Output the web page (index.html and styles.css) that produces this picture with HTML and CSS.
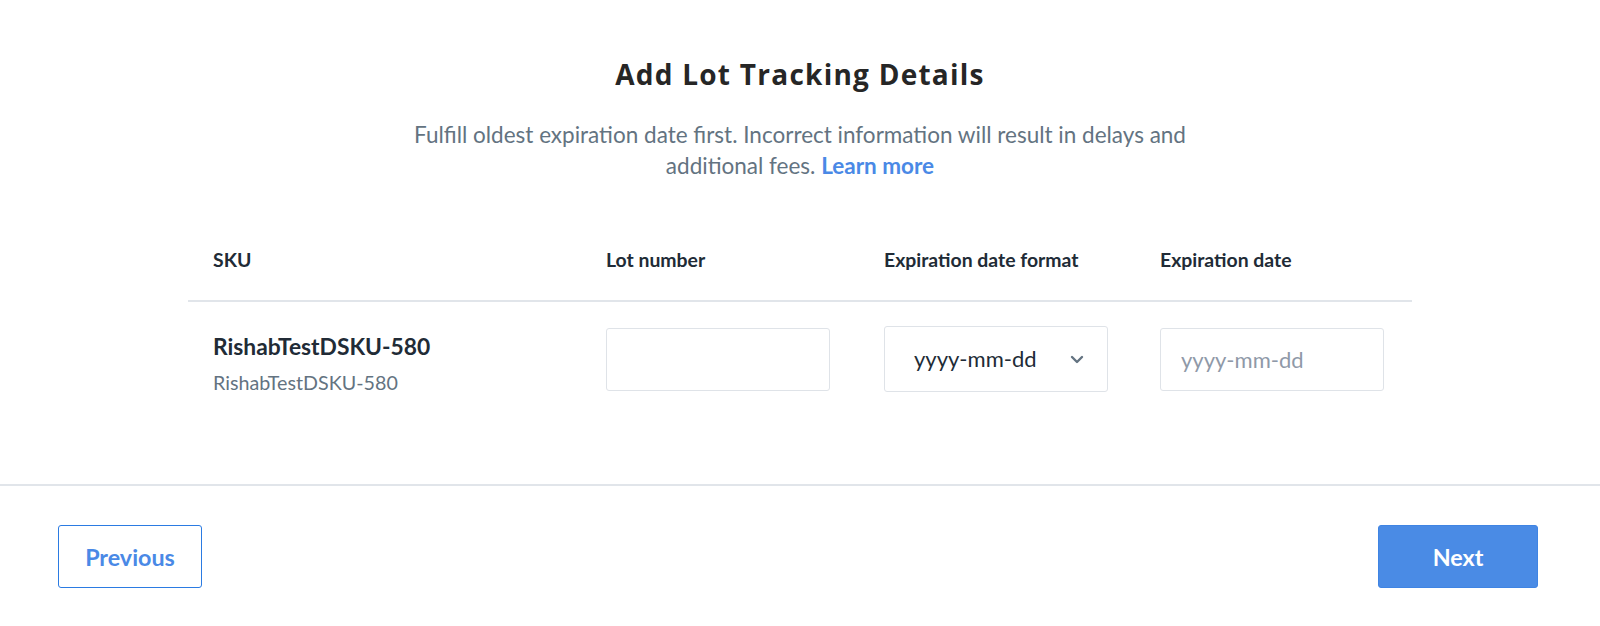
FILE: index.html
```html
<!DOCTYPE html>
<html lang="en">
<head>
<meta charset="utf-8">
<title>Add Lot Tracking Details</title>
<link rel="stylesheet" href="styles.css">
</head>
<body>
<div class="page">
  <main class="content">
    <h1 class="title">Add Lot Tracking Details</h1>
    <p class="subtitle"><span class="sub-line">Fulfill oldest expiration date first. Incorrect information will result in delays and</span><br><span class="sub-line">additional fees.</span> <a class="link" href="#">Learn more</a></p>
    <div class="table">
      <div class="row head">
        <div class="cell c-sku">SKU</div>
        <div class="cell c-lot">Lot number</div>
        <div class="cell c-fmt">Expiration date format</div>
        <div class="cell c-date">Expiration date</div>
      </div>
      <div class="row body">
        <div class="cell c-sku">
          <div class="sku-name">RishabTestDSKU-580</div>
          <div class="sku-sub">RishabTestDSKU-580</div>
        </div>
        <div class="cell c-lot">
          <input class="field" type="text" aria-label="Lot number">
        </div>
        <div class="cell c-fmt">
          <div class="select">
            <span class="select-value">yyyy-mm-dd</span>
            <svg class="chevron" width="14" height="9" viewBox="0 0 14 9" aria-hidden="true"><path d="M2 2 L7 7 L12 2" fill="none" stroke="#637381" stroke-width="2.4" stroke-linecap="round" stroke-linejoin="round"/></svg>
          </div>
        </div>
        <div class="cell c-date">
          <input class="field field-date" type="text" placeholder="yyyy-mm-dd" aria-label="Expiration date">
        </div>
      </div>
    </div>
  </main>
  <footer class="footer">
    <button class="btn btn-secondary" type="button">Previous</button>
    <button class="btn btn-primary" type="button">Next</button>
  </footer>
</div>
</body>
</html>
```

FILE: styles.css
```css
* { box-sizing: border-box; }

html, body {
  margin: 0;
  padding: 0;
  background: #ffffff;
}

body {
  font-family: "Lato", "Liberation Sans", sans-serif;
  color: #212b36;
}

.page {
  width: 1600px;
  height: 626px;
  display: flex;
  flex-direction: column;
}

.content {
  padding-top: 58px;
  display: flex;
  flex-direction: column;
  align-items: center;
  height: 484px;
}

.title {
  margin: 0;
  font-family: "Open Sans", "DejaVu Sans", sans-serif;
  font-weight: 700;
  font-size: 28px;
  line-height: 32px;
  letter-spacing: 1.25px;
  color: #262626;
}

.subtitle {
  margin: 29px 0 0;
  text-align: center;
  font-size: 22.5px;
  line-height: 31px;
  color: #637381;
}

.link {
  color: #4a89e6;
  font-weight: 700;
  text-decoration: none;
}

.table {
  margin-top: 48px;
  width: 1224px;
}

.row {
  display: grid;
  grid-template-columns: 393px 278px 276px 1fr;
}

.row.head {
  padding: 19px 0 28px;
  border-bottom: 2px solid #e1e5ea;
}

.row.head .cell {
  font-size: 19.4px;
  line-height: 24px;
  font-weight: 700;
  color: #212b36;
}

.row.body {
  padding-top: 26px;
  align-items: start;
}

.cell {
  padding-left: 25px;
}

.row.body .c-sku {
  padding-top: 5px;
}

.sku-name {
  font-size: 22.8px;
  line-height: 26px;
  font-weight: 700;
  color: #212b36;
}

.sku-sub {
  margin-top: 13px;
  font-size: 19.7px;
  line-height: 22px;
  color: #637381;
}

.field {
  display: block;
  width: 224px;
  height: 63px;
  margin: 0;
  border: 1px solid #dfe3e8;
  border-radius: 3px;
  background: #ffffff;
  font-family: "Lato", "Liberation Sans", sans-serif;
  font-size: 22px;
  color: #212b36;
  padding: 0 20px;
  outline: none;
}

.field::placeholder {
  color: #8f99a8;
}

.select {
  width: 224px;
  height: 66px;
  margin-top: -2px;
  border: 1px solid #dfe3e8;
  border-radius: 3px;
  display: flex;
  align-items: center;
  justify-content: space-between;
  padding: 0 23px 2px 29px;
}

.select-value {
  font-size: 22px;
  color: #212b36;
}

.chevron {
  display: block;
  margin-top: 2px;
}

.footer {
  border-top: 2px solid #e1e5ea;
  padding: 39px 62px 0 58px;
  display: flex;
  justify-content: space-between;
  align-items: flex-start;
}

.btn {
  height: 63px;
  border-radius: 3px;
  font-family: "Lato", "Liberation Sans", sans-serif;
  font-size: 23.3px;
  font-weight: 700;
  cursor: pointer;
  padding: 0;
}

.btn-secondary {
  width: 144px;
  background: #ffffff;
  border: 1px solid #2b7be2;
  color: #4a89e6;
}

.btn-primary {
  width: 160px;
  background: #4a8be5;
  border: 1px solid #3f84e3;
  color: #ffffff;
}
```
